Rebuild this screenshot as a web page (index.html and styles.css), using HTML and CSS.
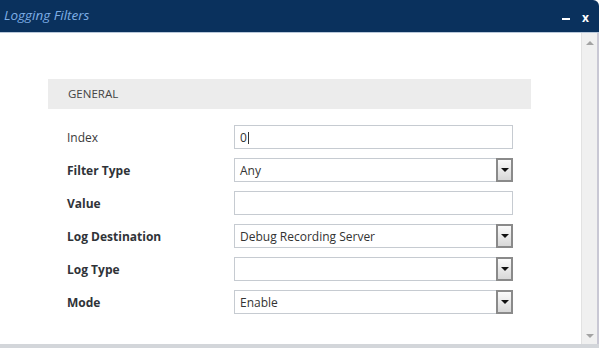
FILE: index.html
```html
<!DOCTYPE html>
<html lang="en">
	<head>
		<meta charset="UTF-8" />
		<title>Logging Filters</title>
		<link rel="stylesheet" href="styles.css">
	</head>
	<body>
		<div class="dialog">
			<div class="title-bar">
				<span class="title">Logging Filters</span>
				<div class="title-buttons">
					<span class="btn-min"></span>
					<span class="btn-close">x</span>
				</div>
			</div>

			<div class="dialog-body">
				<div class="content">
					<div class="section-head">GENERAL</div>

					<div class="form-row">
						<label>Index</label>
						<div class="field"><span class="value">0<span class="caret"></span></span></div>
					</div>
					<div class="form-row">
						<label class="bold">Filter Type</label>
						<div class="field select"><span class="value">Any</span><span class="arrow"></span></div>
					</div>
					<div class="form-row">
						<label class="bold">Value</label>
						<div class="field"></div>
					</div>
					<div class="form-row">
						<label class="bold">Log Destination</label>
						<div class="field select"><span class="value">Debug Recording Server</span><span class="arrow"></span></div>
					</div>
					<div class="form-row">
						<label class="bold">Log Type</label>
						<div class="field select"><span class="value"></span><span class="arrow"></span></div>
					</div>
					<div class="form-row">
						<label class="bold">Mode</label>
						<div class="field select"><span class="value">Enable</span><span class="arrow"></span></div>
					</div>
				</div>

				<div class="scrollbar">
					<span class="scroll-up"></span>
					<span class="scroll-down"></span>
				</div>
			</div>
		</div>
	</body>
</html>
```

FILE: styles.css
```css
body {
	margin: 0;
	font-family: 'Open Sans', sans-serif;
	background-color: #fff;
	color: #333;
}

.dialog {
	width: 599px;
	height: 348px;
	display: flex;
	flex-direction: column;
	box-sizing: border-box;
	border-bottom: 4px solid #d3d6da;
}

.title-bar {
	height: 32px;
	flex-shrink: 0;
	background-color: #0a315d;
	border-bottom: 1px solid #b9c8da;
	border-top-right-radius: 6px;
	display: flex;
	align-items: center;
	justify-content: space-between;
	padding: 0 10px 0 4px;
}

.title {
	font-style: italic;
	font-size: 13.5px;
	color: #7eaee6;
	margin-top: -3px;
}

.title-buttons {
	display: flex;
	align-items: center;
	gap: 12px;
	margin-top: 3px;
}

.btn-min {
	width: 8px;
	height: 2px;
	background-color: #fff;
	margin-top: 3px;
}

.btn-close {
	color: #fff;
	font-weight: bold;
	font-size: 12px;
	line-height: 1;
}

.dialog-body {
	flex: 1;
	display: flex;
	min-height: 0;
}

.content {
	flex: 1;
	padding: 46px 0 0 48px;
}

.section-head {
	width: 463px;
	height: 30px;
	padding-left: 20px;
	background-color: #ececec;
	font-size: 11.5px;
	line-height: 30px;
	color: #444;
	margin-bottom: 16px;
}

.form-row {
	display: flex;
	align-items: center;
	height: 24px;
	margin-bottom: 9px;
	padding-left: 19px;
}

.form-row label {
	width: 167px;
	font-size: 12px;
	color: #3a3a3a;
}

.form-row label.bold {
	font-weight: bold;
	color: #2f3338;
}

.field {
	width: 279px;
	height: 24px;
	box-sizing: border-box;
	border: 1px solid #c6cbd1;
	display: flex;
	align-items: center;
	padding-left: 5px;
	font-size: 12px;
	color: #333;
}

.field .value {
	flex: 1;
}

.caret {
	display: inline-block;
	width: 1px;
	height: 12px;
	margin-left: 1px;
	vertical-align: -2px;
	background-color: #333;
}

.arrow {
	width: 17px;
	height: 24px;
	box-sizing: border-box;
	margin-right: -1px;
	border: 2px solid #8a8a8a;
	background: linear-gradient(#fafafa, #d8d8d8);
	display: flex;
	align-items: center;
	justify-content: center;
}

.arrow::after {
	content: '';
	border-left: 4px solid transparent;
	border-right: 4px solid transparent;
	border-top: 4px solid #111;
}

.scrollbar {
	width: 15px;
	margin-right: 2px;
	border-left: 1px solid #e2e2e2;
	background-color: #f0f0f0;
	display: flex;
	flex-direction: column;
	justify-content: space-between;
	align-items: center;
	padding: 8px 0 6px;
	box-shadow: 2px 0 0 #c9c8d4;
}

.scroll-up {
	border-left: 4px solid transparent;
	border-right: 4px solid transparent;
	border-bottom: 4px solid #a3a3a3;
}

.scroll-down {
	border-left: 4px solid transparent;
	border-right: 4px solid transparent;
	border-top: 4px solid #a3a3a3;
}
```
